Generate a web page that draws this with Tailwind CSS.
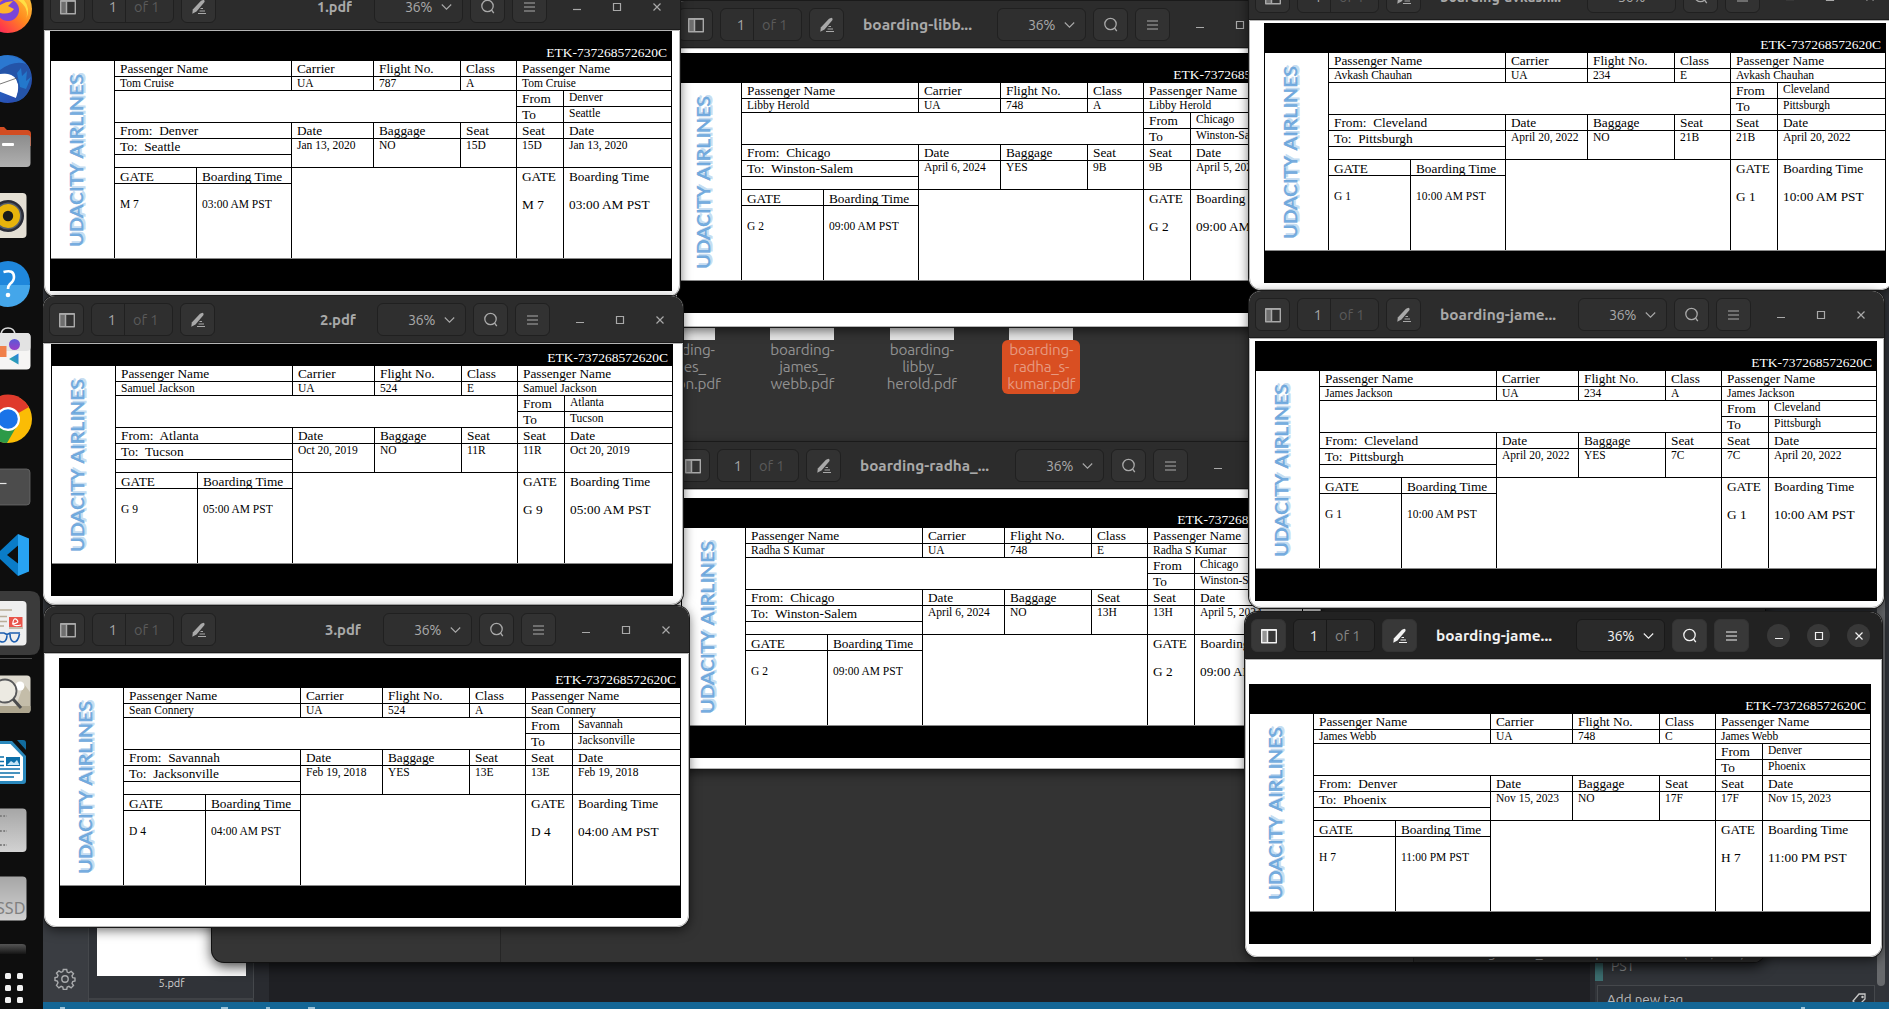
<!DOCTYPE html>
<html lang="en">
<head>
<meta charset="utf-8">
<title>Desktop</title>
<script src="https://cdn.jsdelivr.net/npm/@tailwindcss/browser@4"></script>
</head>
<body class="relative h-[1009px] w-[1889px] overflow-hidden bg-[#1f2023] font-['Ubuntu','Noto_Sans',sans-serif]">

<!-- annotation tool at the back -->
<div class="absolute inset-0 flex flex-col">
  <div class="flex min-h-0 flex-1">
    <div class="flex w-[88px] flex-none flex-col justify-end bg-[#3a3d42] pb-3 pl-[54px]">
      <svg class="size-[22px]" viewBox="0 0 22 22" fill="none" stroke="#a9abad" stroke-width="1.4"><circle cx="11" cy="11" r="3.2"/><path d="M9.3 1.5h3.4l.5 2.6 1.7.7 2.2-1.5 2.4 2.4-1.5 2.2.7 1.7 2.3.4v3l-2.3.6-.7 1.7 1.5 2.2-2.4 2.4-2.2-1.5-1.7.7-.5 2.4H9.3l-.5-2.4-1.7-.7-2.2 1.5-2.4-2.4L4 14.800l-.7-1.700-2.300-.6v-3l2.300-.4.7-1.700-1.500-2.200 2.400-2.400 2.200 1.500 1.700-.7z"/></svg>
    </div>
    <div class="flex w-[166px] flex-none flex-col items-start justify-end border-r border-l border-[#45484c] bg-[#303338]">
      <div class="ml-[8px] h-[80px] w-[149px] flex-none bg-white"></div>
      <p class="flex h-[24px] w-[165px] items-start justify-center border-b-2 border-[#3f4246] text-[11px] leading-[15px] text-[#d0d0d0]">5.pdf</p>
      <div class="h-[2px]"></div>
    </div>
    <div class="w-[15px] flex-none bg-[#292b30]"></div>
    <div class="flex-1 bg-[#1f2024]"></div>
    <div class="flex w-[299px] flex-none flex-col justify-end border-l-[5px] border-[#282a2f] bg-[#313439]">
      <div class="flex h-[45px] w-[200px] items-end border-l-[8px] border-[#3c6e70] pb-[5px] pl-[8px] text-[14px] leading-[19px] text-[#8c8e90]">PST</div>
      <div class="mt-[4px] ml-[2px] flex h-[17px] w-[278px] items-start justify-between overflow-hidden border border-b-0 border-[#45484c] bg-[#2d3035] px-[9px] pt-[3px] pr-[7px] text-[13.500px] leading-[20px] text-[#b8b9bb]"><span>Add new tag</span>
        <svg class="mt-[4px] h-[14px] w-[16px]" viewBox="0 0 16 14" fill="none" stroke="#c8c8c8" stroke-width="1.3"><path d="M8 1h6v5L7 13 2 8z"/><circle cx="11.500" cy="4" r=".6"/></svg>
      </div>
    </div>
  </div>
  <div class="h-[7px] flex-none bg-[#146695]"></div>
</div>
<div class="absolute top-[300px] left-[1877px] h-[686px] w-[8px] rounded bg-[#67696c]"></div>
<div class="absolute top-[300px] left-[1885px] h-[702px] w-[4px] bg-[#303339]"></div>
<div class="absolute top-[1007px] left-[60px] h-[2px] w-[5px] bg-[#9cc3d8]"></div>
<div class="absolute top-[1007px] left-[221px] flex gap-[38px]"><i class="h-[2px] w-[7px] bg-[#9cc3d8]"></i><i class="h-[2px] w-[4px] bg-[#9cc3d8]"></i><i class="h-[2px] w-[7px] bg-[#9cc3d8]"></i></div>
<div class="absolute top-[1007px] left-[1801px] h-[2px] w-[4px] bg-[#9cc3d8]"></div>

<!-- file manager -->
<div class="absolute top-[5px] left-[212px] flex h-[957px] w-[1553px] rounded-xl bg-[#353535] shadow-[0_0_0_1px_#111,0_4px_14px_#000c]">
  <div class="w-[289px] border-r border-[#262626]"></div>
  <div class="flex-1 rounded-br-xl bg-[#333333]"></div>
</div>
<div id="files" class="absolute top-[325px] left-[623px] flex w-[478px] text-center text-[15.300px] leading-[17px] text-[#919191]"></div>
<div class="absolute top-[944px] left-[1413px] flex h-[18px] w-[352px] justify-center overflow-hidden rounded-br-xl border-l border-[#1c1c1c] bg-[#2b2b2b] text-[14px] leading-[16px] text-[#9a9a9a]">“boarding-radha_s-kumar.pdf” selected (123,4 kB)</div>

<div id="windows"></div>

<!-- dock -->
<div class="absolute top-0 left-0 h-[1009px] w-[43px] overflow-hidden bg-[#0e0e0e]">
<svg class="h-[1009px] w-[43px]" viewBox="0 0 43 1009">
  <defs>
    <linearGradient id="fx" x1="1" y1="0" x2="0" y2="1"><stop offset="0" stop-color="#ffe14a"/><stop offset=".45" stop-color="#ff8a1e"/><stop offset=".75" stop-color="#ff3b4a"/><stop offset="1" stop-color="#e3127a"/></linearGradient>
    <linearGradient id="fo" x1="0" y1="0" x2="0" y2="1"><stop offset="0" stop-color="#8c8c8c"/><stop offset="1" stop-color="#b0b0b0"/></linearGradient>
    <linearGradient id="dk" x1="0" y1="0" x2="0" y2="1"><stop offset="0" stop-color="#a6a6a6"/><stop offset="1" stop-color="#d2d2d2"/></linearGradient>
    <linearGradient id="pt" x1="0" y1="0" x2="0" y2="1"><stop offset="0" stop-color="#555"/><stop offset="1" stop-color="#151515"/></linearGradient>
    <linearGradient id="tb" x1="0" y1="0" x2="1" y2="1"><stop offset="0" stop-color="#2484d8"/><stop offset="1" stop-color="#2a3fa8"/></linearGradient>
    <linearGradient id="pp" x1="0" y1="0" x2="0" y2="1"><stop offset="0" stop-color="#5a58d6"/><stop offset="1" stop-color="#9a3fc8"/></linearGradient>
    <linearGradient id="tr" x1="1" y1="0" x2="0" y2="1"><stop offset="0" stop-color="#2a7ee0"/><stop offset="1" stop-color="#2fb59a"/></linearGradient>
  </defs>
  <circle cx="8" cy="9" r="24" fill="url(#fx)"/><circle cx="8" cy="10" r="11" fill="#7a45d8"/><path d="M-4 8Q2 2 13 1L8 6Q12 8 14 9Q10 15 0 13z" fill="#ffb52a"/><path d="M18 0Q30 8 26 20Q31 8 24 0z" fill="#ffdf45"/>
  <circle cx="8" cy="79" r="24" fill="url(#tb)"/><path d="M0 60Q-6 72-2 91L16 98Q20 88 17 80Q13 73 0 73z" fill="#fff"/><path d="M0 60V74Q12 72 16 79Q22 90 14 102Q25 101 30 88Q34 74 26 64L14 57z" fill="#2454a8"/><path d="M0 56Q16 54 26 64Q14 60 0 70z" fill="#2b78d0"/><path d="M0 84L17 78" stroke="#555" stroke-width=".8"/><path d="M17 73l4-5 1 8 5-5-1 10 5-4-5 12-6-2z" fill="#2378cc"/>
  <path d="M0 127h4l3 3h20q4 0 4 4v12H0z" fill="#d24c22"/><path d="M0 135h27q3.500 0 3.500 3v25q0 4-4 4H0z" fill="url(#fo)"/><rect x="2" y="143" width="12" height="3" rx="1" fill="#fff"/>
  <rect x="-18" y="193" width="44.500" height="45" rx="4" fill="#e4dfd4"/><circle cx="8" cy="216" r="16" fill="#2b2d38"/><circle cx="8" cy="216" r="13.500" fill="#555e6c"/><circle cx="8" cy="216" r="12" fill="#e8b40c"/><circle cx="8" cy="216" r="5.200" fill="#1a1a1a"/>
  <circle cx="8" cy="283" r="22" fill="#1f87dc"/><path d="M-14 285h44a22 22 0 0 1-44 0z" fill="#44a6ea"/><path d="M3.500 272Q14 269 14 277Q14 281 10 284Q8 286 8 289" fill="none" stroke="#fff" stroke-width="2.600"/><circle cx="8" cy="295" r="2.300" fill="#fff"/>
  <path d="M1 334q1-6 7-6t7 6" fill="none" stroke="#ddd" stroke-width="1.600"/><rect x="-14" y="333" width="44.500" height="36.500" rx="4" fill="#f6f5f4"/><rect x="-14" y="333" width="44.500" height="18" rx="4" fill="#e3e3e3"/><circle cx="14.500" cy="344.500" r="5.500" fill="url(#pp)"/><path d="M0 346h6.500v11H0z" fill="#f0804a"/><path d="M9 359l9.500-5.500v11z" fill="url(#tr)"/>
  <circle cx="8" cy="419" r="24" fill="#fbbc05"/><path d="M8 419L-13 407A24 24 0 0 1 29 407z" fill="#df3a2c"/><path d="M18 424L7 443A24 24 0 0 1-16 419L0 412z" fill="#2c9a48"/><circle cx="8" cy="419" r="12" fill="#fff"/><circle cx="8" cy="419" r="9.800" fill="#1a73e8"/>
  <rect x="-16" y="469" width="46" height="36" rx="3.500" fill="#4c4c4c" stroke="#6b6b6b" stroke-width=".8"/><path d="M0 483.500h6.500" stroke="#e6e6e6" stroke-width="1.200"/>
  <path d="M0 551L18 534V576L0 559z" fill="#0a7cc8"/><path d="M18 534l11 4.500v33L18 576z" fill="#28a3f2"/><path d="M7 555l11-9.500v18z" fill="#0e0e0e"/>
  <path d="M0 591h30q10 0 10 10v44q0 10-10 10H0z" fill="#3b3b3b"/><rect x="-16" y="601" width="42.500" height="44.500" rx="4" fill="#efefef"/><path d="M0 610h12M0 616.500h7M0 621.500h7M0 626h4M9 628h14" stroke="#b8ad98" stroke-width="1.700"/><rect x="9" y="617" width="13.500" height="10" fill="#e9544a"/><path d="M12 624q8-1 5-4t-4 2 8 3" fill="none" stroke="#fff" stroke-width="1.200"/><path d="M-2 633h6l3 1.500 3-1.500h10M7 634.500q0 7-4 7.500q-3 0-5-2M10 634q0 7 4 8q4 0 5.500-8" fill="none" stroke="#1e5fb0" stroke-width="1.600"/>
  <path d="M0 658.500h32" stroke="#4a4a4a"/>
  <rect x="-16" y="675.500" width="46.500" height="37.500" rx="3.500" fill="#ddd9ce"/><path d="M0 706h30.500v4q0 3-3 3H0z" fill="#aea68f"/><path d="M16 706l8-22 6 8v14z" fill="#c4bda9"/><circle cx="20" cy="686" r="4.500" fill="#fff"/><circle cx="5" cy="691" r="11.500" fill="#eceae2" stroke="#58595b" stroke-width="1.800"/><path d="M13 699l8 9" stroke="#4a4b4d" stroke-width="3"/>
  <path d="M0 741h12l14 15v25q0 3-3 3H0z" fill="#2a88bc"/><path d="M17 740h6q3 0 3 3v7z" fill="#126c9e"/><path d="M0 744h10.500L23 757v22q0 2-2 2H0z" fill="#fff"/><path d="M0 757h4M0 761.500h4M0 765.500h4M0 769h20M0 773h20M0 777h14" stroke="#0c70aa" stroke-width="1.700"/><rect x="6" y="757" width="14" height="9" fill="#0c70aa"/><path d="M7 765l4-4 3 2 3-3 2.500 5z" fill="#c6e6f6"/>
  <rect x="-16" y="808.500" width="42.500" height="43.500" rx="4" fill="url(#dk)"/><path d="M0 816h7M0 831h7M0 845h7" stroke="#808080" stroke-width="1.800" stroke-dasharray="1.800 1.500"/>
  <rect x="-16" y="876.500" width="42.500" height="44" rx="4" fill="url(#dk)"/><text x="-4" y="914" font-size="15.500" fill="#808080" font-family="Noto Sans, sans-serif" textLength="29.500" lengthAdjust="spacingAndGlyphs">SSD</text>
  <path d="M0 944h22q4 0 4 3v7H0z" fill="url(#pt)"/>
  <g fill="#f2f2f2"><rect x="5" y="973" width="6" height="6" rx="1.500"/><rect x="17" y="973" width="6" height="6" rx="1.500"/><rect x="5" y="985" width="6" height="6" rx="1.500"/><rect x="17" y="985" width="6" height="6" rx="1.500"/><rect x="5" y="997" width="6" height="6" rx="1.500"/><rect x="17" y="997" width="6" height="6" rx="1.500"/></g>
</svg>
</div>

<script>
const files = [
  ['boarding-', 'james_', 'jackson.pdf'],
  ['boarding-', 'james_', 'webb.pdf'],
  ['boarding-', 'libby_', 'herold.pdf'],
  ['boarding-', 'radha_s-', 'kumar.pdf'],
];
document.getElementById('files').innerHTML = files.map((f, i) => `
  <div class="flex flex-1 flex-col items-center">
    <div class="h-[15px] w-[64px] bg-[#e8e8e8]"></div>
    <p class="${i === 3 ? 'flex w-[78px] justify-center rounded-md bg-[#d94f22] pt-px pb-[2px] text-[#e79a80]' : 'flex w-[78px] justify-center pt-px pb-[2px]'}"><span class="inline-block flex-none tracking-[-0.25px]">${f.join('<br>')}</span></p>
  </div>`).join('');

// One boarding pass: cells of an eight-column grid.
const big = (t, extra = '') => `<p class="whitespace-pre text-[13.300px] leading-[15px] ${extra}">${t}</p>`;
const small = (t, extra = '') => `<p class="whitespace-pre text-[11.500px] leading-[12px] ${extra}">${t}</p>`;
const cell = (cls, html) => `<div class="border-black pl-[5px] ${cls}">${html}</div>`;

function ticket(t) {
  return `<div class="flex h-[260px] w-[622px] flex-none flex-col bg-black font-['Liberation_Serif',serif] text-black">
    <p class="h-[30px] flex-none pt-[14px] pr-[5px] text-right text-[13.500px] leading-[16px] text-white">ETK-737268572620C</p>
    <div class="mx-px grid h-[198px] flex-none grid-cols-[63px_82px_95px_82px_87px_56px_47px_108px] grid-rows-[15px_14px_16px_16px_16px_16px_13px_16px_76px] overflow-hidden border-b border-[#8a8a8a] bg-white">
      <div class="row-span-9">
        <svg class="h-[197px] w-[60px]" viewBox="0 0 60 197" font-family="Carlito, Lato, sans-serif" font-size="19.500">
          <g transform="rotate(-90)">
            <text x="-184.500" y="34" textLength="173" lengthAdjust="spacingAndGlyphs" fill="#c5dcf1" stroke="#c5dcf1" stroke-width=".8">UDACITY AIRLINES</text>
            <text x="-186" y="32" textLength="173" lengthAdjust="spacingAndGlyphs" fill="#76ade0" stroke="#5b9bd5" stroke-width=".35">UDACITY AIRLINES</text>
          </g>
        </svg>
      </div>
      ${cell('col-span-2 border-l', big('Passenger Name'))}
      ${cell('border-l', big('Carrier'))}
      ${cell('border-l', big('Flight No.'))}
      ${cell('border-l', big('Class'))}
      ${cell('col-span-2 border-l', big('Passenger Name'))}

      ${cell('col-span-2 border-l border-t', small(t.name))}
      ${cell('border-l border-t', small('UA'))}
      ${cell('border-l border-t', small(t.flight))}
      ${cell('border-l border-t', small(t.cls))}
      ${cell('col-span-2 border-l border-t', small(t.name))}

      <div class="col-span-5 row-span-2 border-t border-l border-black"></div>
      ${cell('border-l border-t', big('From'))}
      ${cell('border-l border-t', small(t.from))}
      ${cell('border-l border-t', big('To'))}
      ${cell('border-l border-t', small(t.to))}

      ${cell('col-span-2 border-l border-t', big('From:  ' + t.from))}
      ${cell('border-l border-t', big('Date'))}
      ${cell('border-l border-t', big('Baggage'))}
      ${cell('border-l border-t', big('Seat'))}
      ${cell('border-l border-t', big('Seat'))}
      ${cell('border-l border-t', big('Date'))}

      ${cell('col-span-2 border-l border-t', big('To:  ' + t.to))}
      ${cell('row-span-2 border-l border-t', small(t.date))}
      ${cell('row-span-2 border-l border-t', small(t.bag))}
      ${cell('row-span-2 border-l border-t', small(t.seat))}
      ${cell('row-span-2 border-l border-t', small(t.seat))}
      ${cell('row-span-2 border-l border-t', small(t.date2 || t.date))}
      <div class="col-span-2 border-t border-l border-black"></div>

      ${cell('border-l border-t', big('GATE', 'pt-px'))}
      ${cell('border-l border-t', big('Boarding Time', 'pt-px'))}
      <div class="col-span-3 row-span-2 border-t border-l border-black"></div>
      ${cell('row-span-2 border-l border-t', big('GATE', 'pt-px') + big(t.gate, 'pt-[13px]'))}
      ${cell('row-span-2 border-l border-t', big('Boarding Time', 'pt-px') + big(t.time, 'pt-[13px]'))}
      ${cell('border-l border-t', small(t.gate, 'pt-[14px]'))}
      ${cell('border-l border-t', small(t.time, 'pt-[14px]'))}
    </div>
  </div>`;
}

const icons = {
  side: `<svg class="size-4" viewBox="0 0 16 16"><path d="M.7 1.700h14.600v13H.7z" fill="none" stroke="currentColor" stroke-width="1.400" stroke-linejoin="round"/><path d="M1 2h5v12.500H1z" fill="currentColor" opacity=".5"/><path d="M6.500 2v12.500M1 2h14" stroke="currentColor" stroke-width="1.500"/></svg>`,
  edit: `<svg class="size-4" viewBox="0 0 16 16" fill="currentColor"><path d="M12.500.8q1.500.6 1 2.200L5.500 12.500 1.300 14.800 1.800 10.500 10 1.800z"/><path d="M9.500 9.500H12M8.500 12H14M7 14.500h8" stroke="currentColor" stroke-width="1.200"/></svg>`,
  down: `<svg class="h-2 w-[11px]" viewBox="0 0 11 8" fill="none" stroke="currentColor" stroke-width="1.100"><path d="M.8 1.500l4.700 4.700 4.700-4.700"/></svg>`,
  search: `<svg class="size-4" viewBox="0 0 16 16" fill="none" stroke="currentColor" stroke-width="1.300"><circle cx="7.500" cy="7" r="5.700"/><path d="M11.500 11l2.300 3.200"/></svg>`,
  menu: `<svg class="h-3 w-[11px]" viewBox="0 0 11 12" stroke="currentColor" stroke-width="1.200"><path d="M0 2h11M0 6h11M0 10h11"/></svg>`,
  min: `<svg class="size-3" viewBox="0 0 12 12" stroke="currentColor" stroke-width="1.200"><path d="M2 8.500h8"/></svg>`,
  max: `<svg class="size-3" viewBox="0 0 12 12" fill="none" stroke="currentColor" stroke-width="1.200"><path d="M2.500 2.500h7v7h-7z"/></svg>`,
  close: `<svg class="size-3" viewBox="0 0 12 12" stroke="currentColor" stroke-width="1.200"><path d="M2.500 2.500l7 7M9.500 2.500l-7 7"/></svg>`,
};

function win(w) {
  const btn = w.active ? 'flex h-[33px] w-[35px] flex-none items-center justify-center rounded-md border border-[#333] bg-[#383838]'
                       : 'flex h-[33px] w-[35px] flex-none items-center justify-center rounded-md border border-[#202020] bg-[#323232]';
  const flat = w.active ? 'flex h-[33px] flex-none items-center rounded-md border border-[#191919] bg-[#2a2a2a]'
                        : 'flex h-[33px] flex-none items-center rounded-md border border-[#202020] bg-[#2f2f2f]';
  const ctl = w.active ? 'flex size-[23px] items-center justify-center rounded-full bg-[#383838]' : 'flex size-[23px] items-center justify-center';
  return `<section class="absolute flex flex-col overflow-hidden rounded-xl bg-white shadow-[0_0_0_1px_#1a1a1a,0_3px_12px_#0009]" style="left:${w.x}px;top:${w.y}px;width:${w.w}px;height:${w.h}px">
    <header class="flex h-[47px] flex-none items-start border-b border-[#1c1c1c] pr-[7px] pl-[6px] pt-[7px] text-[14.500px] ${w.active ? 'bg-[#222222] text-[#f2f2f2]' : 'bg-[#2c2c2c] text-[#a9a9a9]'}">
      <div class="${btn}">${icons.side}</div>
      <div class="${flat} ml-[7px] w-[82px]">
        <span class="flex h-full w-[33px] items-center justify-end border-r ${w.active ? 'border-[#191919]' : 'border-[#202020]'} pr-[8px]">1</span>
        <span class="pl-[8px] ${w.active ? 'text-[#858585]' : 'text-[#5a5a5a]'}">of 1</span>
      </div>
      <div class="${btn} ml-[7px]">${icons.edit}</div>
      <b class="flex h-[33px] flex-none items-center text-[14.500px] whitespace-nowrap" style="margin-left:${w.gap}px"><svg height="33" width="${w.tw}" fill="currentColor"><text x="0" y="22" textLength="${w.tw}" lengthAdjust="spacingAndGlyphs">${w.title}</text></svg></b>
      <div class="ml-auto flex flex-none items-start gap-[7px]">
        <div class="${flat} w-[89px] justify-end gap-[9px] pr-[10px]"><span class="tracking-[-0.5px]">36%</span>${icons.down}</div>
        <div class="${btn}">${icons.search}</div>
        <div class="${btn}">${icons.menu}</div>
        <div class="ml-[11px] flex h-[33px] items-center gap-[17px] pr-[5px]">
          <span class="${ctl}">${icons.min}</span><span class="${ctl}">${icons.max}</span><span class="${ctl}">${icons.close}</span>
        </div>
      </div>
    </header>
    <div class="min-h-0 flex-1 overflow-hidden rounded-b-xl border border-[#b5b5b5] bg-white">
      <div style="margin-left:${w.tx}px;margin-top:${w.ty}px">${ticket(w.t)}</div>
    </div>
  </section>`;
}

// tx, ty: offset of the page inside the view (negative when scrolled)
const wins = [
  {x:672, y:1, w:631, h:326, title:'boarding-libb...', tw:109, gap:19, tx:4, ty:4,
   t:{name:'Libby Herold', flight:'748', cls:'A', from:'Chicago', to:'Winston-Salem', date:'April 6, 2024', date2:'April 5, 2024', bag:'YES', seat:'9B', gate:'G 2', time:'09:00 AM PST'}},
  {x:669, y:442, w:652, h:327, title:'boarding-radha_...', tw:129, gap:19, tx:11, ty:8,
   t:{name:'Radha S Kumar', flight:'748', cls:'E', from:'Chicago', to:'Winston-Salem', date:'April 6, 2024', date2:'April 5, 2024', bag:'NO', seat:'13H', gate:'G 2', time:'09:00 AM PST'}},
  {x:1249, y:-27, w:644, h:317, title:'boarding-avkash...', tw:121, gap:19, tx:14, ty:2,
   t:{name:'Avkash Chauhan', flight:'234', cls:'E', from:'Cleveland', to:'Pittsburgh', date:'April 20, 2022', bag:'NO', seat:'21B', gate:'G 1', time:'10:00 AM PST'}},
  {x:1249, y:291, w:635, h:317, title:'boarding-jame...', tw:116, gap:19, tx:5, ty:2,
   t:{name:'James Jackson', flight:'234', cls:'A', from:'Cleveland', to:'Pittsburgh', date:'April 20, 2022', bag:'YES', seat:'7C', gate:'G 1', time:'10:00 AM PST'}},
  {x:44, y:-17, w:636, h:314, title:'1.pdf', tw:35, gap:101, tx:5, ty:0,
   t:{name:'Tom Cruise', flight:'787', cls:'A', from:'Denver', to:'Seattle', date:'Jan 13, 2020', bag:'NO', seat:'15D', gate:'M 7', time:'03:00 AM PST'}},
  {x:43, y:296, w:640, h:309, title:'2.pdf', tw:36, gap:105, tx:7, ty:-8,
   t:{name:'Samuel Jackson', flight:'524', cls:'E', from:'Atlanta', to:'Tucson', date:'Oct 20, 2019', bag:'NO', seat:'11R', gate:'G 9', time:'05:00 AM PST'}},
  {x:44, y:606, w:645, h:321, title:'3.pdf', tw:36, gap:109, tx:14, ty:4,
   t:{name:'Sean Connery', flight:'524', cls:'A', from:'Savannah', to:'Jacksonville', date:'Feb 19, 2018', bag:'YES', seat:'13E', gate:'D 4', time:'04:00 AM PST'}},
  {x:1245, y:612, w:637, h:345, title:'boarding-jame...', tw:116, gap:19, tx:3, ty:24, active:true,
   t:{name:'James Webb', flight:'748', cls:'C', from:'Denver', to:'Phoenix', date:'Nov 15, 2023', bag:'NO', seat:'17F', gate:'H 7', time:'11:00 PM PST'}},
];
document.getElementById('windows').innerHTML = wins.map(win).join('');
</script>
</body>
</html>
